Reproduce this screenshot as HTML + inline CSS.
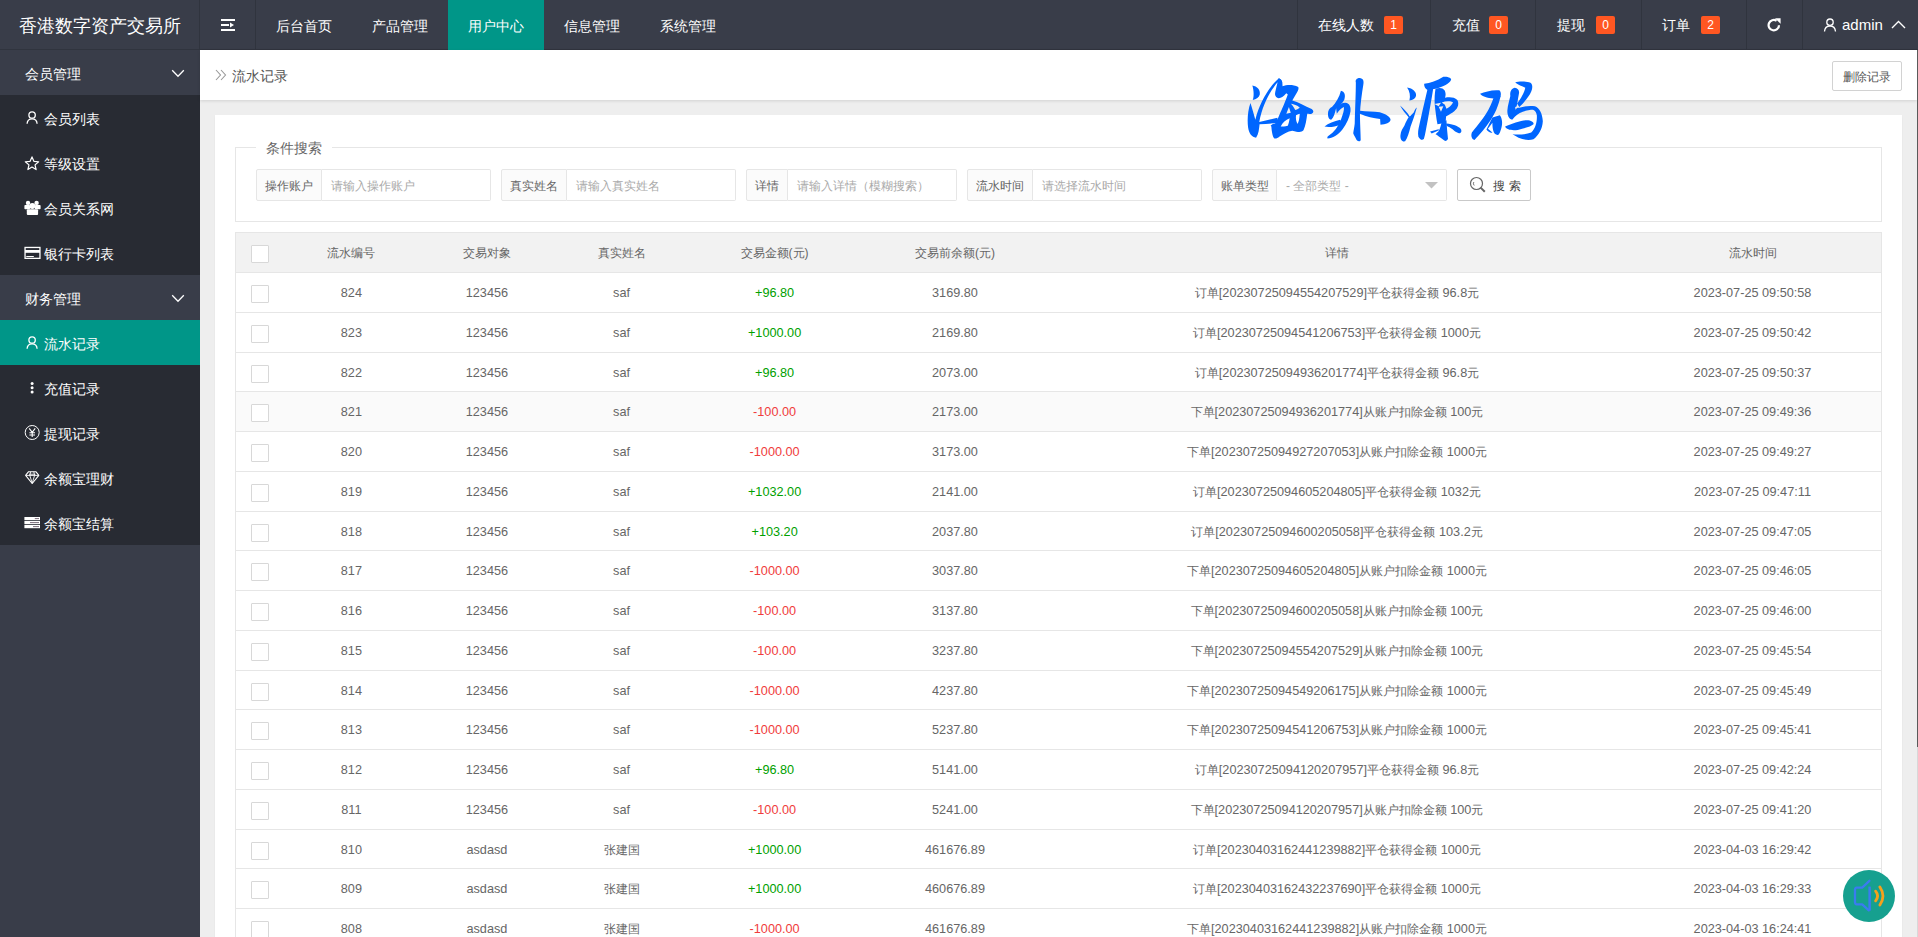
<!DOCTYPE html>
<html><head><meta charset="utf-8">
<style>
*{box-sizing:border-box;margin:0;padding:0}
html,body{width:1918px;height:937px;overflow:hidden;background:#eee;font-family:"Liberation Sans",sans-serif;color:#666}
.abs{position:absolute}
#hdr{position:absolute;left:0;top:0;width:1918px;height:50px;background:#393D49;border-bottom:1px solid #30343e}
#logo{position:absolute;left:0;top:0;width:199px;height:49px;line-height:52px;text-align:center;color:#fff;font-size:18px}
.vsep{position:absolute;top:0;width:1px;height:49px;background:#30343e}
.nav{position:absolute;top:0;height:49px;line-height:52px;color:#fff;font-size:14px;text-align:center}
.nav.on{background:#009688;height:50px}
.ritem{position:absolute;top:0;height:49px;line-height:51px;color:#fff;font-size:14px;white-space:nowrap}
.badge{position:absolute;top:16px;width:19px;height:18px;line-height:18px;background:#FF5722;color:#fff;font-size:12px;text-align:center;border-radius:2px}
#side{position:absolute;left:0;top:50px;width:200px;height:887px;background:#393D49}
.grp{position:absolute;left:0;width:200px;height:45px;line-height:48px;color:#fff;font-size:14px;padding-left:25px}
.child{position:absolute;left:0;width:200px;background:#282B33}
.it{position:absolute;left:0;width:200px;height:45px;line-height:48px;color:#fff;font-size:14px;padding-left:44px}
.it.on{background:#009688}
.it svg{position:absolute}
#crumb{position:absolute;left:200px;top:50px;width:1717px;height:50px;background:#fff;box-shadow:0 1px 3px rgba(0,0,0,.12)}
#card{position:absolute;left:215px;top:115px;width:1687px;height:830px;background:#fff;box-shadow:0 1px 2px rgba(0,0,0,.05)}
#fs{position:absolute;left:235px;top:147px;width:1647px;height:75px;border:1px solid #e6e6e6}
#legend{position:absolute;left:256px;top:139px;width:76px;height:18px;background:#fff;text-align:center;font-size:14px;line-height:18px;color:#666}
.lab{position:absolute;top:169px;height:32px;border:1px solid #e6e6e6;background:#FBFBFB;border-radius:2px 0 0 2px;font-size:12px;line-height:32px;text-align:center;color:#666}
.inp{position:absolute;top:169px;height:32px;border:1px solid #e6e6e6;border-left:none;background:#fff;border-radius:0 2px 2px 0;font-size:12px;line-height:32px;padding-left:9px;color:#aaa;white-space:nowrap}
.btn{position:absolute;border:1px solid #C9C9C9;border-radius:2px;background:#fff;color:#555;font-size:12px;text-align:center}
.tbl{position:absolute;left:235px;top:232px;width:1647px;height:720px;border:1px solid #e6e6e6;border-bottom:none}
.th{position:absolute;left:0;top:0;width:1645px;height:40px;background:#F2F2F2;border-bottom:1px solid #e6e6e6}
.tr{position:absolute;left:0;width:1645px;height:39.75px;border-bottom:1px solid #e6e6e6;background:#fff}
.c{position:absolute;top:0;width:400px;text-align:center;line-height:40px;font-size:12.7px;color:#666;white-space:nowrap}
.c .k{font-size:12px}
.th .c{font-size:12px}
.c.g{color:#009F00}
.c.r{color:#F03C3C}
.cb{position:absolute;width:18px;height:18px;border:1px solid #d8d8d8;border-radius:1px;background:#fff}
#sb{position:absolute;left:1917px;top:50px;width:1px;height:887px;background:#d8d8d8}
#sbt{position:absolute;left:1917px;top:50px;width:1px;height:697px;background:#5a5a5a}
#fab{position:absolute;left:1843px;top:870px;width:52px;height:52px;border-radius:50%;background:#16A08F}
</style></head>
<body>
<div id="hdr">
  <div id="logo">香港数字资产交易所</div>
  <div class="vsep" style="left:199px"></div>
  <div class="vsep" style="left:255px"></div>
  <svg class="abs" style="left:221px;top:19px" width="15" height="12" viewBox="0 0 15 12"><rect x="0" y="0" width="14" height="2" fill="#fff"/><rect x="0" y="5" width="8" height="2" fill="#fff"/><path d="M9 3.5 L13 6 L9 8.5Z" fill="#fff"/><rect x="0" y="10" width="14" height="2" fill="#fff"/></svg>
  <div class="nav" style="left:256px;width:96px">后台首页</div>
  <div class="nav" style="left:352px;width:96px">产品管理</div>
  <div class="nav on" style="left:448px;width:96px">用户中心</div>
  <div class="nav" style="left:544px;width:96px">信息管理</div>
  <div class="nav" style="left:640px;width:96px">系统管理</div>
  <div class="vsep" style="left:1297px"></div>
  <div class="ritem" style="left:1318px">在线人数</div><div class="badge" style="left:1384px">1</div>
  <div class="vsep" style="left:1430px"></div>
  <div class="ritem" style="left:1452px">充值</div><div class="badge" style="left:1489px">0</div>
  <div class="vsep" style="left:1535px"></div>
  <div class="ritem" style="left:1557px">提现</div><div class="badge" style="left:1596px">0</div>
  <div class="vsep" style="left:1641px"></div>
  <div class="ritem" style="left:1662px">订单</div><div class="badge" style="left:1701px">2</div>
  <div class="vsep" style="left:1746px"></div>
  <svg class="abs" style="left:1766px;top:17px" width="16" height="16" viewBox="0 0 16 16"><path d="M13 8.2 A5.2 5.2 0 1 1 10.6 3.8" fill="none" stroke="#fff" stroke-width="2.2"/><path d="M9 1.2 L14.6 1.2 L14.6 6.8Z" fill="#fff"/></svg>
  <div class="vsep" style="left:1802px"></div>
  <svg class="abs" style="left:1823px;top:18px" width="14" height="14" viewBox="0 0 14 14"><circle cx="7" cy="4.2" r="3.2" fill="none" stroke="#fff" stroke-width="1.3"/><path d="M1.5 13.5 C1.8 9.5 4 8 7 8 C10 8 12.2 9.5 12.5 13.5" fill="none" stroke="#fff" stroke-width="1.3"/></svg>
  <div class="ritem" style="left:1842px;top:-1px;font-size:15px">admin</div>
  <svg class="abs" style="left:1891px;top:20px" width="15" height="9" viewBox="0 0 15 9"><path d="M1 8 L7.5 1.5 L14 8" fill="none" stroke="#fff" stroke-width="1.4"/></svg>
</div>

<div id="side">
  <div class="grp" style="top:0">会员管理<svg style="position:absolute;left:0;top:0" width="200" height="45" viewBox="0 0 200 45"><path d="M172.2 20.3 L178 26.2 L183.8 20.3" fill="none" stroke="#fff" stroke-width="1.3"/></svg></div>
  <div class="child" style="top:45px;height:180px">
    <div class="it" style="top:0">会员列表<svg style="left:0;top:0" width="45" height="45" viewBox="0 0 45 45"><circle cx="32.1" cy="20" r="3.2" fill="none" stroke="#fff" stroke-width="1.3"/><path d="M27.1 28.8 C27.3 25.6 29.3 23.9 32.1 23.9 C34.9 23.9 36.9 25.6 37.1 28.8" fill="none" stroke="#fff" stroke-width="1.3"/></svg></div>
    <div class="it" style="top:45px">等级设置<svg style="left:0;top:0" width="45" height="45" viewBox="0 0 45 45"><path d="M32.00 16.90 L33.88 21.31 L38.66 21.74 L35.04 24.89 L36.11 29.56 L32.00 27.10 L27.89 29.56 L28.96 24.89 L25.34 21.74 L30.12 21.31Z" fill="none" stroke="#fff" stroke-width="1.2" stroke-linejoin="round"/></svg></div>
    <div class="it" style="top:90px">会员关系网<svg style="left:0;top:0" width="45" height="45" viewBox="0 0 45 45"><circle cx="28" cy="17.9" r="2.2" fill="#fff"/><circle cx="36.6" cy="17.9" r="2.2" fill="#fff"/><rect x="24.4" y="20" width="5.6" height="4.3" rx="0.8" fill="#fff"/><rect x="34.8" y="20" width="5.8" height="4.3" rx="0.8" fill="#fff"/><circle cx="32.3" cy="21" r="3" fill="#fff"/><rect x="26.8" y="24.3" width="11.3" height="5.6" rx="1" fill="#fff"/></svg></div>
    <div class="it" style="top:135px">银行卡列表<svg style="left:0;top:0" width="45" height="45" viewBox="0 0 45 45"><rect x="25.05" y="17.45" width="14.9" height="10.9" fill="none" stroke="#fff" stroke-width="1.3"/><rect x="25" y="20" width="15" height="2.8" fill="#fff"/><rect x="26.3" y="26" width="7.5" height="1" fill="#fff"/></svg></div>
  </div>
  <div class="grp" style="top:225px">财务管理<svg style="position:absolute;left:0;top:0" width="200" height="45" viewBox="0 0 200 45"><path d="M172.2 20.3 L178 26.2 L183.8 20.3" fill="none" stroke="#fff" stroke-width="1.3"/></svg></div>
  <div class="child" style="top:270px;height:225px">
    <div class="it on" style="top:0">流水记录<svg style="left:0;top:0" width="45" height="45" viewBox="0 0 45 45"><circle cx="32.1" cy="20" r="3.2" fill="none" stroke="#fff" stroke-width="1.3"/><path d="M27.1 28.8 C27.3 25.6 29.3 23.9 32.1 23.9 C34.9 23.9 36.9 25.6 37.1 28.8" fill="none" stroke="#fff" stroke-width="1.3"/></svg></div>
    <div class="it" style="top:45px">充值记录<svg style="left:0;top:0" width="45" height="45" viewBox="0 0 45 45"><circle cx="32.1" cy="18.4" r="1.5" fill="#fff"/><circle cx="32.1" cy="22.7" r="1.5" fill="#fff"/><circle cx="32.1" cy="27" r="1.5" fill="#fff"/></svg></div>
    <div class="it" style="top:90px">提现记录<svg style="left:0;top:0" width="45" height="45" viewBox="0 0 45 45"><circle cx="32.2" cy="22.5" r="7" fill="none" stroke="#fff" stroke-width="1"/><path d="M29.2 18.3 L32.2 22.3 L35.2 18.3 M32.2 22.3 V27 M29.4 22.8 H35 M29.4 25 H35" fill="none" stroke="#fff" stroke-width="1.1"/></svg></div>
    <div class="it" style="top:135px">余额宝理财<svg style="left:0;top:0" width="45" height="45" viewBox="0 0 45 45"><path d="M28.6 16.7 H35.8 L38.8 20.4 L32.2 28.5 L25.6 20.4Z" fill="none" stroke="#fff" stroke-width="1.1" stroke-linejoin="round"/><path d="M26 20.4 H38.4 M29.8 20.4 L32.2 28.2 L34.6 20.4 M29.8 20.4 L30.6 16.8 M34.6 20.4 L33.8 16.8" fill="none" stroke="#fff" stroke-width="0.9"/><rect x="29" y="18.6" width="6.4" height="1.6" fill="#fff" opacity="0.6"/></svg></div>
    <div class="it" style="top:180px">余额宝结算<svg style="left:0;top:0" width="45" height="45" viewBox="0 0 45 45"><rect x="24.4" y="17" width="15.6" height="3.2" fill="#fff"/><rect x="24.4" y="21" width="15.6" height="3.2" fill="#fff"/><rect x="24.4" y="25" width="15.6" height="3.2" fill="#fff"/><rect x="34.8" y="18.2" width="4.2" height="0.9" fill="#6a5a6a"/><rect x="30" y="22.2" width="9" height="0.9" fill="#6a5a6a"/><rect x="33" y="26.2" width="6" height="0.9" fill="#6a5a6a"/></svg></div>
  </div>
</div>

<div id="crumb">
  <svg class="abs" style="left:15px;top:19px" width="12" height="12" viewBox="0 0 12 12"><path d="M1 1 L5.5 6 L1 11 M6 1 L10.5 6 L6 11" fill="none" stroke="#999" stroke-width="1.1"/></svg>
  <div class="abs" style="left:32px;top:0;height:50px;line-height:52px;font-size:14px;color:#555">流水记录</div>
</div>
<div class="btn" style="left:1832px;top:61px;width:70px;height:30px;line-height:31px;border-color:#d2d2d2">删除记录</div>
<div id="card"></div>
<div id="fs"></div>
<div id="legend">条件搜索</div>

<div class="lab" style="left:256px;width:66px">操作账户</div><div class="inp" style="left:322px;width:169px">请输入操作账户</div>
<div class="lab" style="left:501px;width:66px">真实姓名</div><div class="inp" style="left:567px;width:169px">请输入真实姓名</div>
<div class="lab" style="left:746px;width:42px">详情</div><div class="inp" style="left:788px;width:169px">请输入详情（模糊搜索）</div>
<div class="lab" style="left:967px;width:66px">流水时间</div><div class="inp" style="left:1033px;width:169px">请选择流水时间</div>
<div class="lab" style="left:1212px;width:65px">账单类型</div><div class="inp" style="left:1277px;width:170px">- 全部类型 -<svg class="abs" style="left:148px;top:12px" width="13" height="7" viewBox="0 0 13 7"><path d="M0 0 H13 L6.5 6.5Z" fill="#c2c2c2"/></svg></div>
<div class="btn" style="left:1457px;top:169px;width:74px;height:32px;line-height:33px"><svg class="abs" style="left:11px;top:6px" width="18" height="18" viewBox="0 0 18 18"><circle cx="7.5" cy="7.5" r="6" fill="none" stroke="#666" stroke-width="1.2"/><path d="M11.6 11.6 L15.8 15.8" stroke="#666" stroke-width="2"/><path d="M4.8 6 A3 3 0 0 0 5.2 9.5" fill="none" stroke="#666" stroke-width="0.9"/></svg><span style="position:absolute;left:35px;top:0;letter-spacing:4px;color:#444">搜索</span></div>

<div class="tbl">
<div class="th"><div class="cb" style="left:15px;top:12px"></div><div class="c" style="left:-84.6px"><span class="k">流水编号</span></div><div class="c" style="left:50.9px"><span class="k">交易对象</span></div><div class="c" style="left:185.5px"><span class="k">真实姓名</span></div><div class="c" style="left:338.6px"><span class="k">交易金额</span>(<span class="k">元</span>)</div><div class="c" style="left:519.0px"><span class="k">交易前余额</span>(<span class="k">元</span>)</div><div class="c" style="left:901.0px"><span class="k">详情</span></div><div class="c" style="left:1316.5px"><span class="k">流水时间</span></div></div>
<div class="tr" style="top:40.00px"><div class="cb" style="left:15px;top:12px"></div><div class="c" style="left:-84.6px">824</div><div class="c" style="left:50.9px">123456</div><div class="c" style="left:185.5px">saf</div><div class="c g" style="left:338.6px">+96.80</div><div class="c" style="left:519.0px">3169.80</div><div class="c" style="left:901.0px"><span class="k">订单</span>[20230725094554207529]<span class="k">平仓获得金额</span> 96.8<span class="k">元</span></div><div class="c" style="left:1316.5px">2023-07-25 09:50:58</div></div>
<div class="tr" style="top:79.75px"><div class="cb" style="left:15px;top:12px"></div><div class="c" style="left:-84.6px">823</div><div class="c" style="left:50.9px">123456</div><div class="c" style="left:185.5px">saf</div><div class="c g" style="left:338.6px">+1000.00</div><div class="c" style="left:519.0px">2169.80</div><div class="c" style="left:901.0px"><span class="k">订单</span>[20230725094541206753]<span class="k">平仓获得金额</span> 1000<span class="k">元</span></div><div class="c" style="left:1316.5px">2023-07-25 09:50:42</div></div>
<div class="tr" style="top:119.50px"><div class="cb" style="left:15px;top:12px"></div><div class="c" style="left:-84.6px">822</div><div class="c" style="left:50.9px">123456</div><div class="c" style="left:185.5px">saf</div><div class="c g" style="left:338.6px">+96.80</div><div class="c" style="left:519.0px">2073.00</div><div class="c" style="left:901.0px"><span class="k">订单</span>[20230725094936201774]<span class="k">平仓获得金额</span> 96.8<span class="k">元</span></div><div class="c" style="left:1316.5px">2023-07-25 09:50:37</div></div>
<div class="tr" style="top:159.25px;background:#FAFAFA"><div class="cb" style="left:15px;top:12px"></div><div class="c" style="left:-84.6px">821</div><div class="c" style="left:50.9px">123456</div><div class="c" style="left:185.5px">saf</div><div class="c r" style="left:338.6px">-100.00</div><div class="c" style="left:519.0px">2173.00</div><div class="c" style="left:901.0px"><span class="k">下单</span>[20230725094936201774]<span class="k">从账户扣除金额</span> 100<span class="k">元</span></div><div class="c" style="left:1316.5px">2023-07-25 09:49:36</div></div>
<div class="tr" style="top:199.00px"><div class="cb" style="left:15px;top:12px"></div><div class="c" style="left:-84.6px">820</div><div class="c" style="left:50.9px">123456</div><div class="c" style="left:185.5px">saf</div><div class="c r" style="left:338.6px">-1000.00</div><div class="c" style="left:519.0px">3173.00</div><div class="c" style="left:901.0px"><span class="k">下单</span>[20230725094927207053]<span class="k">从账户扣除金额</span> 1000<span class="k">元</span></div><div class="c" style="left:1316.5px">2023-07-25 09:49:27</div></div>
<div class="tr" style="top:238.75px"><div class="cb" style="left:15px;top:12px"></div><div class="c" style="left:-84.6px">819</div><div class="c" style="left:50.9px">123456</div><div class="c" style="left:185.5px">saf</div><div class="c g" style="left:338.6px">+1032.00</div><div class="c" style="left:519.0px">2141.00</div><div class="c" style="left:901.0px"><span class="k">订单</span>[20230725094605204805]<span class="k">平仓获得金额</span> 1032<span class="k">元</span></div><div class="c" style="left:1316.5px">2023-07-25 09:47:11</div></div>
<div class="tr" style="top:278.50px"><div class="cb" style="left:15px;top:12px"></div><div class="c" style="left:-84.6px">818</div><div class="c" style="left:50.9px">123456</div><div class="c" style="left:185.5px">saf</div><div class="c g" style="left:338.6px">+103.20</div><div class="c" style="left:519.0px">2037.80</div><div class="c" style="left:901.0px"><span class="k">订单</span>[20230725094600205058]<span class="k">平仓获得金额</span> 103.2<span class="k">元</span></div><div class="c" style="left:1316.5px">2023-07-25 09:47:05</div></div>
<div class="tr" style="top:318.25px"><div class="cb" style="left:15px;top:12px"></div><div class="c" style="left:-84.6px">817</div><div class="c" style="left:50.9px">123456</div><div class="c" style="left:185.5px">saf</div><div class="c r" style="left:338.6px">-1000.00</div><div class="c" style="left:519.0px">3037.80</div><div class="c" style="left:901.0px"><span class="k">下单</span>[20230725094605204805]<span class="k">从账户扣除金额</span> 1000<span class="k">元</span></div><div class="c" style="left:1316.5px">2023-07-25 09:46:05</div></div>
<div class="tr" style="top:358.00px"><div class="cb" style="left:15px;top:12px"></div><div class="c" style="left:-84.6px">816</div><div class="c" style="left:50.9px">123456</div><div class="c" style="left:185.5px">saf</div><div class="c r" style="left:338.6px">-100.00</div><div class="c" style="left:519.0px">3137.80</div><div class="c" style="left:901.0px"><span class="k">下单</span>[20230725094600205058]<span class="k">从账户扣除金额</span> 100<span class="k">元</span></div><div class="c" style="left:1316.5px">2023-07-25 09:46:00</div></div>
<div class="tr" style="top:397.75px"><div class="cb" style="left:15px;top:12px"></div><div class="c" style="left:-84.6px">815</div><div class="c" style="left:50.9px">123456</div><div class="c" style="left:185.5px">saf</div><div class="c r" style="left:338.6px">-100.00</div><div class="c" style="left:519.0px">3237.80</div><div class="c" style="left:901.0px"><span class="k">下单</span>[20230725094554207529]<span class="k">从账户扣除金额</span> 100<span class="k">元</span></div><div class="c" style="left:1316.5px">2023-07-25 09:45:54</div></div>
<div class="tr" style="top:437.50px"><div class="cb" style="left:15px;top:12px"></div><div class="c" style="left:-84.6px">814</div><div class="c" style="left:50.9px">123456</div><div class="c" style="left:185.5px">saf</div><div class="c r" style="left:338.6px">-1000.00</div><div class="c" style="left:519.0px">4237.80</div><div class="c" style="left:901.0px"><span class="k">下单</span>[20230725094549206175]<span class="k">从账户扣除金额</span> 1000<span class="k">元</span></div><div class="c" style="left:1316.5px">2023-07-25 09:45:49</div></div>
<div class="tr" style="top:477.25px"><div class="cb" style="left:15px;top:12px"></div><div class="c" style="left:-84.6px">813</div><div class="c" style="left:50.9px">123456</div><div class="c" style="left:185.5px">saf</div><div class="c r" style="left:338.6px">-1000.00</div><div class="c" style="left:519.0px">5237.80</div><div class="c" style="left:901.0px"><span class="k">下单</span>[20230725094541206753]<span class="k">从账户扣除金额</span> 1000<span class="k">元</span></div><div class="c" style="left:1316.5px">2023-07-25 09:45:41</div></div>
<div class="tr" style="top:517.00px"><div class="cb" style="left:15px;top:12px"></div><div class="c" style="left:-84.6px">812</div><div class="c" style="left:50.9px">123456</div><div class="c" style="left:185.5px">saf</div><div class="c g" style="left:338.6px">+96.80</div><div class="c" style="left:519.0px">5141.00</div><div class="c" style="left:901.0px"><span class="k">订单</span>[20230725094120207957]<span class="k">平仓获得金额</span> 96.8<span class="k">元</span></div><div class="c" style="left:1316.5px">2023-07-25 09:42:24</div></div>
<div class="tr" style="top:556.75px"><div class="cb" style="left:15px;top:12px"></div><div class="c" style="left:-84.6px">811</div><div class="c" style="left:50.9px">123456</div><div class="c" style="left:185.5px">saf</div><div class="c r" style="left:338.6px">-100.00</div><div class="c" style="left:519.0px">5241.00</div><div class="c" style="left:901.0px"><span class="k">下单</span>[20230725094120207957]<span class="k">从账户扣除金额</span> 100<span class="k">元</span></div><div class="c" style="left:1316.5px">2023-07-25 09:41:20</div></div>
<div class="tr" style="top:596.50px"><div class="cb" style="left:15px;top:12px"></div><div class="c" style="left:-84.6px">810</div><div class="c" style="left:50.9px">asdasd</div><div class="c" style="left:185.5px"><span class="k">张建国</span></div><div class="c g" style="left:338.6px">+1000.00</div><div class="c" style="left:519.0px">461676.89</div><div class="c" style="left:901.0px"><span class="k">订单</span>[20230403162441239882]<span class="k">平仓获得金额</span> 1000<span class="k">元</span></div><div class="c" style="left:1316.5px">2023-04-03 16:29:42</div></div>
<div class="tr" style="top:636.25px"><div class="cb" style="left:15px;top:12px"></div><div class="c" style="left:-84.6px">809</div><div class="c" style="left:50.9px">asdasd</div><div class="c" style="left:185.5px"><span class="k">张建国</span></div><div class="c g" style="left:338.6px">+1000.00</div><div class="c" style="left:519.0px">460676.89</div><div class="c" style="left:901.0px"><span class="k">订单</span>[20230403162432237690]<span class="k">平仓获得金额</span> 1000<span class="k">元</span></div><div class="c" style="left:1316.5px">2023-04-03 16:29:33</div></div>
<div class="tr" style="top:676.00px"><div class="cb" style="left:15px;top:12px"></div><div class="c" style="left:-84.6px">808</div><div class="c" style="left:50.9px">asdasd</div><div class="c" style="left:185.5px"><span class="k">张建国</span></div><div class="c r" style="left:338.6px">-1000.00</div><div class="c" style="left:519.0px">461676.89</div><div class="c" style="left:901.0px"><span class="k">下单</span>[20230403162441239882]<span class="k">从账户扣除金额</span> 1000<span class="k">元</span></div><div class="c" style="left:1316.5px">2023-04-03 16:24:41</div></div>
</div>

<svg class="abs" style="left:0;top:0" width="1918" height="160" viewBox="0 0 1918 160"><g transform="translate(1240,75) scale(0.07468)"><path d="M165,140 C230,150 275,200 265,260 C255,300 220,320 170,335 C190,290 185,200 165,140Z" fill="#0066FF"/><path d="M140,375 C170,470 190,540 205,600 C260,380 380,170 520,45 C560,60 575,95 560,120 L500,100 C400,220 300,400 258,630 L500,572 L510,640 C430,650 340,655 262,658 C255,720 250,790 215,840 C160,830 120,790 108,700 C95,600 105,470 140,375Z" fill="#0066FF"/><path d="M520,45 C565,70 570,110 570,150 C620,135 700,120 780,160 C790,190 785,200 700,340 C780,360 870,420 960,455 C990,480 990,500 960,520 C930,525 910,520 900,520 C890,600 880,680 850,740 C820,770 790,770 700,745 C640,750 580,790 530,825 C500,850 480,855 460,850 C440,835 425,770 420,690 L410,680 C430,660 450,650 470,650 L510,575 C550,480 590,400 640,260 L620,245 C580,290 550,310 520,310 C480,305 465,270 470,240 C480,200 490,140 520,45Z" fill="#0066FF"/><path d="M680,385 C740,395 790,420 800,440 C770,460 750,470 740,470 C720,430 700,400 680,385Z M655,430 L680,505 L620,520Z" fill="#eeeeee"/><path d="M750,540 C770,530 790,525 800,520 C795,580 790,630 770,655 C750,620 745,580 750,540Z M545,690 C570,640 610,600 665,580 C660,620 650,660 640,680 C600,690 570,690 545,690Z" fill="#ffffff"/></g><g transform="translate(1320,75) scale(0.07468)"><path d="M280,210 C330,220 345,270 325,330 C300,380 250,420 215,450 C200,510 185,570 150,600 C115,595 100,550 110,490 C120,450 140,440 160,430 C210,370 260,300 280,210Z" fill="#0066FF"/><path d="M215,440 C260,395 300,370 340,372 C400,378 415,430 408,490 C395,570 360,650 300,730 C240,805 170,845 100,850 C95,835 100,825 115,815 C190,765 245,690 280,600 C310,520 325,470 320,430 C290,440 250,480 225,520Z" fill="#0066FF"/><path d="M60,690 C110,650 190,620 270,600 C285,620 285,650 270,665 C200,690 130,705 60,690Z" fill="#0066FF"/><path d="M530,40 C580,45 590,80 580,130 C560,250 540,400 535,520 C535,650 545,780 545,870 C540,895 510,895 490,870 C470,830 450,800 445,780 C450,740 460,700 465,650 C470,450 480,250 480,100 C470,70 490,40 530,40Z" fill="#0066FF"/><path d="M535,480 C620,490 720,490 800,500 C880,520 940,560 945,600 C940,640 880,665 810,665 L805,590 C720,580 620,560 535,520Z" fill="#0066FF"/></g><g transform="translate(1395,72) scale(0.07794)"><path d="M155,200 C230,210 275,260 270,300 C265,340 230,360 185,365 C200,310 190,250 155,200Z" fill="#0066FF"/><path d="M65,430 C110,470 160,520 190,570 L240,520 C250,490 265,465 280,455 C260,530 230,620 200,700 C180,780 160,850 130,890 C90,900 65,860 70,810 C75,760 100,720 120,690 C140,640 160,600 175,580 C140,540 90,480 65,430Z" fill="#0066FF"/><path d="M375,150 C450,140 540,110 620,60 C690,55 725,80 720,100 C700,150 620,190 520,215 L420,230 C390,220 370,180 375,150Z" fill="#0066FF"/><path d="M420,210 L490,215 C470,350 440,500 420,620 C400,720 390,800 370,860 C350,880 320,870 300,830 C290,780 300,730 310,690 C340,560 380,380 420,210Z" fill="#0066FF"/><path d="M520,215 C570,200 610,200 640,240 C655,280 650,310 640,330 C700,320 760,320 800,360 C830,420 800,480 740,520 C700,545 670,560 655,570 L650,640 C630,650 600,660 545,670 C530,600 520,500 510,420 C505,340 510,270 520,215Z" fill="#0066FF"/><path d="M505,410 L590,395 L560,440Z M560,445 L620,440 L590,510Z M600,390 C650,370 720,370 745,390 C720,430 690,460 660,470 L640,420Z" fill="#eeeeee"/><path d="M600,640 L660,620 C665,700 670,780 680,860 C660,890 640,890 620,870 C580,840 540,810 520,800 L560,760 C580,720 590,680 600,640Z" fill="#0066FF"/><path d="M660,660 C740,670 810,690 845,730 C860,760 850,785 820,785 C780,780 750,740 700,710 C680,700 660,690 655,680Z" fill="#0066FF"/><path d="M450,765 L560,735 L565,748 L470,790Z" fill="#0066FF"/></g><g transform="translate(1470,75) scale(0.07468)"><path d="M135,250 C200,225 300,195 390,205 C420,220 420,280 395,310 C330,320 180,310 135,250Z" fill="#0066FF"/><path d="M330,260 L410,280 C380,420 330,520 280,600 C220,690 130,800 60,870 C20,860 10,810 25,770 C100,680 200,560 250,460 C290,380 310,320 330,260Z" fill="#0066FF"/><path d="M300,570 L400,540 C430,580 440,650 420,710 C400,780 390,800 370,805 C340,800 320,780 310,740 C300,700 300,660 300,640 L240,720 L300,770 C280,780 240,760 220,730Z" fill="#0066FF"/><path d="M605,100 C650,80 750,80 810,105 C840,130 840,170 820,220 C790,290 720,370 660,430 L630,380 C680,320 730,230 740,170 C700,150 640,130 605,100Z" fill="#0066FF"/><path d="M600,170 C640,170 665,210 655,250 C640,330 630,400 620,440 L660,440 C720,420 800,405 870,420 C930,440 970,520 975,620 C970,720 920,810 850,860 C790,880 720,870 650,840 C610,820 580,800 570,795 C640,800 740,800 820,770 C880,720 900,620 895,540 C880,470 850,460 800,470 C720,480 650,510 600,560 L565,600 C520,590 500,540 500,480 C505,400 530,330 540,280 C530,220 560,175 600,170Z" fill="#0066FF"/><path d="M605,430 L650,415 L610,465Z" fill="#eeeeee"/><path d="M470,690 C560,650 680,610 760,605 C830,605 860,640 850,660 C820,690 740,710 640,735 C560,745 490,735 470,690Z" fill="#0066FF"/></g></svg>
<div id="sb"></div><div id="sbt"></div>
<div id="fab"><svg class="abs" style="left:8px;top:9px" width="36" height="34" viewBox="0 0 36 34"><path d="M18.4 1.8 L11.2 8.6 H5.6 Q4 8.6 4 11 V23 Q4 25.3 5.6 25.3 H11.2 L17.8 31.4" fill="none" stroke="#3A7BF0" stroke-width="2.3" stroke-linejoin="round" stroke-linecap="round"/><path d="M18.6 7.6 V31.6" stroke="#3A7BF0" stroke-width="2.5"/><path d="M24.6 12.2 Q28.6 17 24.6 21.8" fill="none" stroke="#F5A11C" stroke-width="2.8" stroke-linecap="round"/><path d="M28.9 8 Q35 17 28.9 26" fill="none" stroke="#F5A11C" stroke-width="2.8" stroke-linecap="round"/></svg></div>
</body></html>
